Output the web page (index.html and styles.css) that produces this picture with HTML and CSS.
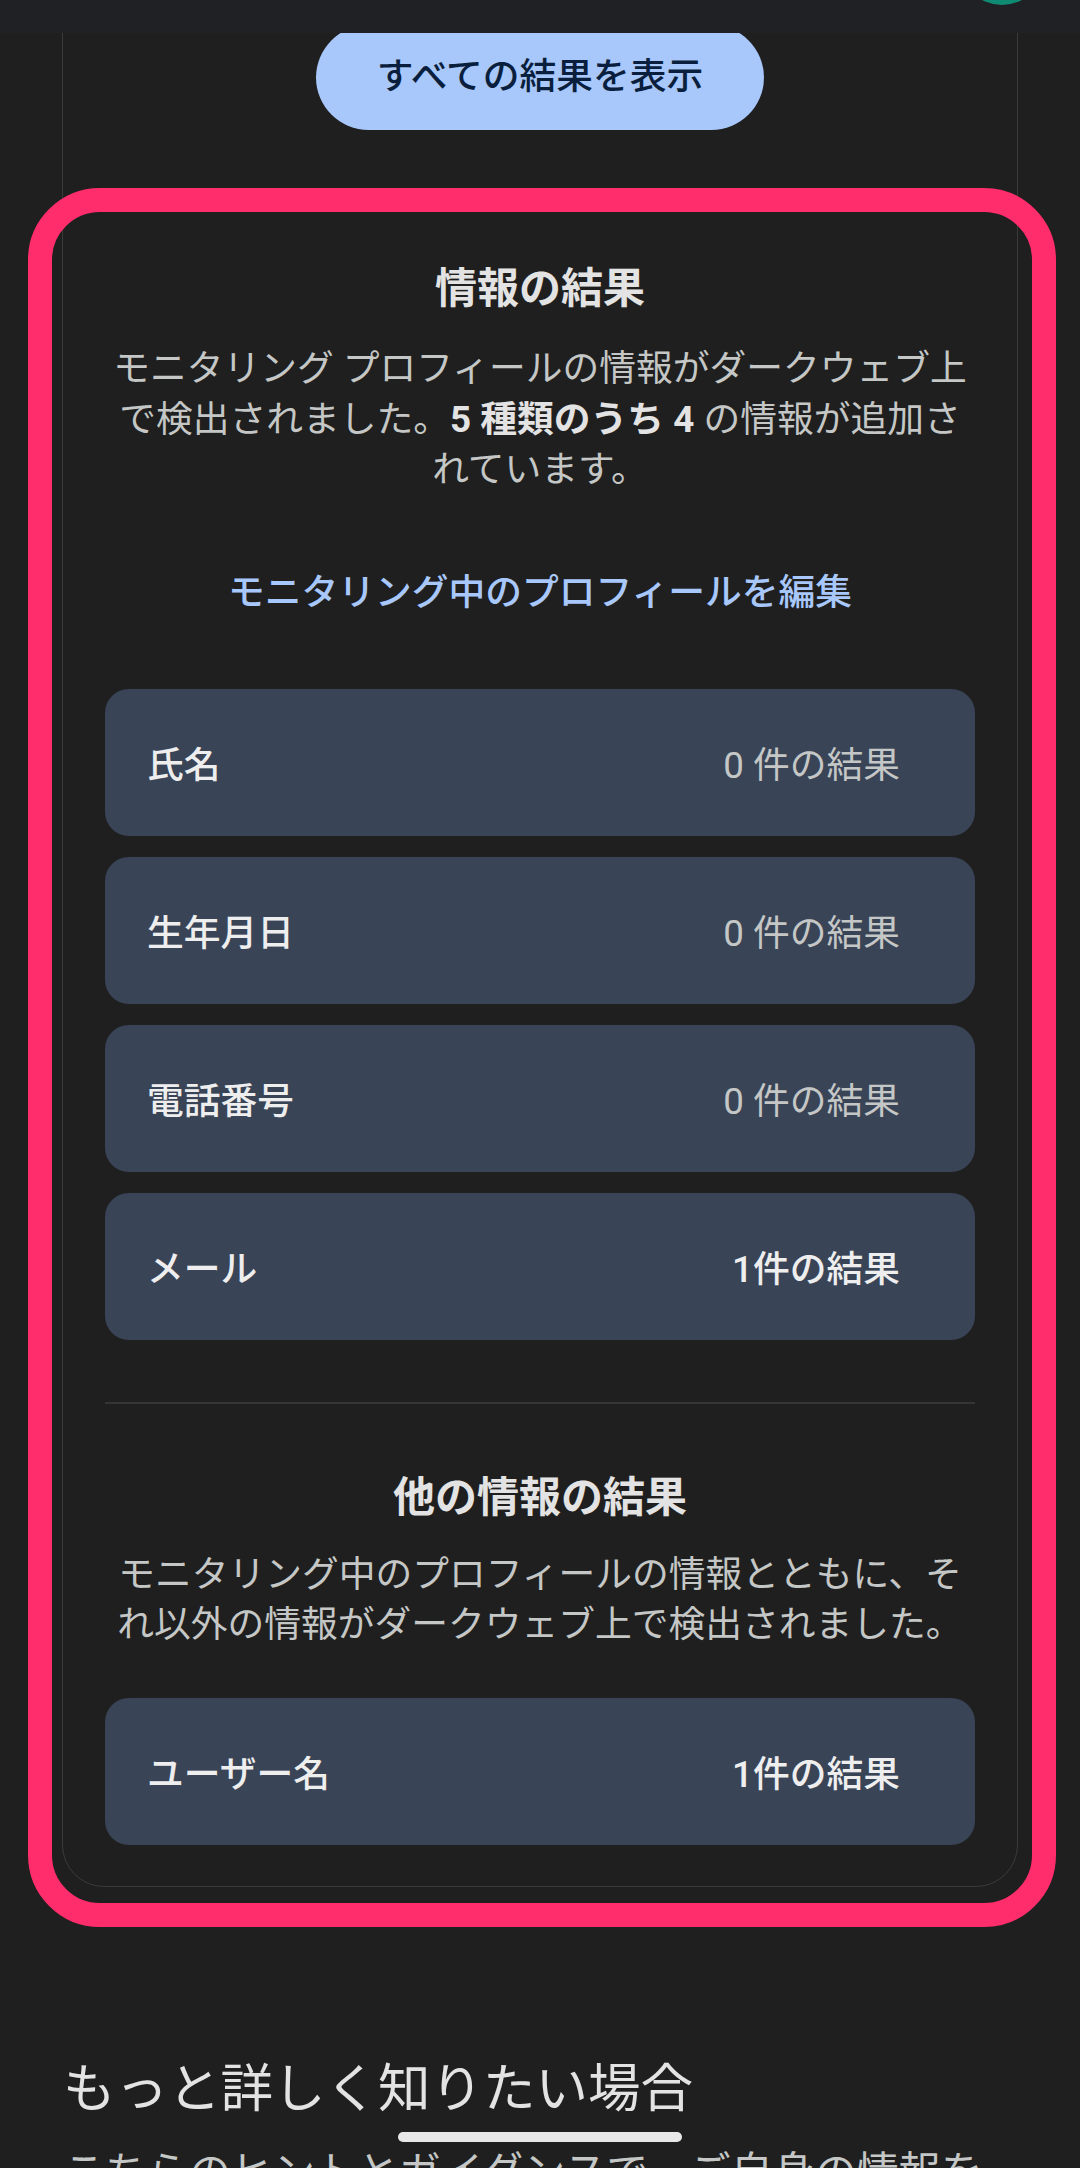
FILE: index.html
```html
<!DOCTYPE html>
<html lang="ja">
<head>
<meta charset="utf-8">
<title>情報の結果</title>
<link rel="stylesheet" href="styles.css">
</head>
<body>
<div class="screen">
  <header class="appbar"><span class="avatar"></span></header>

  <section class="card">
    <div class="card-top">
      <button class="btn-all">すべての結果を表示</button>
    </div>

    <div class="info">
      <h2 class="info-title">情報の結果</h2>
      <p class="info-desc">モニタリング プロフィールの情報がダークウェブ上<br>で検出されました。<strong>5 種類のうち 4</strong> の情報が追加さ<br>れています。</p>
      <a class="edit-link">モニタリング中のプロフィールを編集</a>

      <ul class="result-list first-list">
        <li class="result-row"><span class="label">氏名</span><span class="count">0 件の結果</span></li>
        <li class="result-row"><span class="label">生年月日</span><span class="count">0 件の結果</span></li>
        <li class="result-row"><span class="label">電話番号</span><span class="count">0 件の結果</span></li>
        <li class="result-row"><span class="label">メール</span><span class="count hit">1件の結果</span></li>
      </ul>

      <hr class="divider">

      <h2 class="info-title other-title">他の情報の結果</h2>
      <p class="info-desc other-desc">モニタリング中のプロフィールの情報とともに、そ<br>れ以外の情報がダークウェブ上で検出されました。</p>

      <ul class="result-list other-list">
        <li class="result-row"><span class="label">ユーザー名</span><span class="count hit">1件の結果</span></li>
      </ul>
    </div>
  </section>

  <section class="learn-more">
    <h2 class="learn-title">もっと詳しく知りたい場合</h2>
    <p class="learn-text">こちらのヒントとガイダンスで、ご自身の情報を</p>
  </section>

  <div class="highlight"></div>
  <div class="home-indicator"></div>
</div>
</body>
</html>
```

FILE: styles.css
```css
* { box-sizing: border-box; }

html, body {
  margin: 0;
  padding: 0;
  background: #1f1f1f;
}

body {
  font-family: Roboto, "Noto Sans CJK JP", sans-serif;
  color: #e3e3e3;
}

.screen {
  position: relative;
  width: 1080px;
  height: 2168px;
  overflow: hidden;
  background: #1f1f1f;
}

.appbar {
  position: absolute;
  top: 0;
  left: 0;
  width: 1080px;
  height: 33px;
  background: #202124;
  z-index: 3;
  overflow: hidden;
}

.avatar {
  position: absolute;
  left: 960px;
  top: -79px;
  width: 84px;
  height: 84px;
  border-radius: 50%;
  background: #0f8a73;
}

.card {
  margin: -40px 62px 0;
  border: 1px solid #3a3a3a;
  border-radius: 42px;
  padding: 64px 42px 41px;
}

.card-top {
  display: flex;
  justify-content: center;
}

.btn-all {
  height: 105px;
  padding: 0 61px;
  border: none;
  border-radius: 53px;
  background: #a8c7fa;
  color: #0a1f3d;
  font-family: Roboto, "Noto Sans CJK JP", sans-serif;
  font-size: 36.75px;
  font-weight: 500;
  line-height: 1;
}

.info {
  display: flex;
  flex-direction: column;
  align-items: stretch;
  text-align: center;
  margin-top: 131px;
}

.info-title {
  margin: 0;
  font-size: 42px;
  line-height: 56px;
  font-weight: 700;
  color: #e3e3e3;
}

.info-desc {
  margin: 27px 0 0;
  font-size: 36.75px;
  line-height: 50.5px;
  color: #c4c7c5;
  white-space: nowrap;
}

.info-desc strong {
  font-weight: 700;
  color: #e3e3e3;
}

.edit-link {
  display: block;
  margin-top: 72px;
  font-size: 36.75px;
  line-height: 50px;
  font-weight: 500;
  color: #a8c7fa;
}

.result-list {
  list-style: none;
  margin: 71px 0 0;
  padding: 0;
  display: flex;
  flex-direction: column;
  gap: 21px;
}

.result-row {
  height: 147px;
  border-radius: 24px;
  background: #394457;
  display: flex;
  align-items: center;
  justify-content: space-between;
  padding: 0 75px 0 42px;
  font-size: 36.75px;
}

.label {
  font-weight: 500;
  color: #eeeeee;
}

.count {
  color: #c4c7c5;
  font-weight: 400;
}

.count.hit {
  color: #eeeeee;
  font-weight: 500;
}

.divider {
  margin: 62px 0 0;
  border: none;
  height: 2px;
  background: #353535;
}

.other-title {
  margin-top: 66px;
}

.other-desc {
  margin-top: 24px;
}

.other-list {
  margin-top: 47px;
}

.learn-more {
  padding: 0 63px;
  margin-top: 167px;
}

.learn-title {
  margin: 0;
  font-size: 52.5px;
  line-height: 70px;
  font-weight: 400;
  color: #e3e3e3;
}

.learn-text {
  margin: 19px 0 0;
  font-size: 42px;
  line-height: 60px;
  color: #c4c7c5;
  white-space: nowrap;
}

.highlight {
  position: absolute;
  left: 28px;
  top: 188px;
  width: 1028px;
  height: 1739px;
  border: 24px solid #ff2d6c;
  border-radius: 72px;
  pointer-events: none;
  z-index: 2;
}

.home-indicator {
  position: absolute;
  left: 398px;
  top: 2132px;
  width: 284px;
  height: 10px;
  border-radius: 5px;
  background: #e8e8e8;
  z-index: 4;
}
```
